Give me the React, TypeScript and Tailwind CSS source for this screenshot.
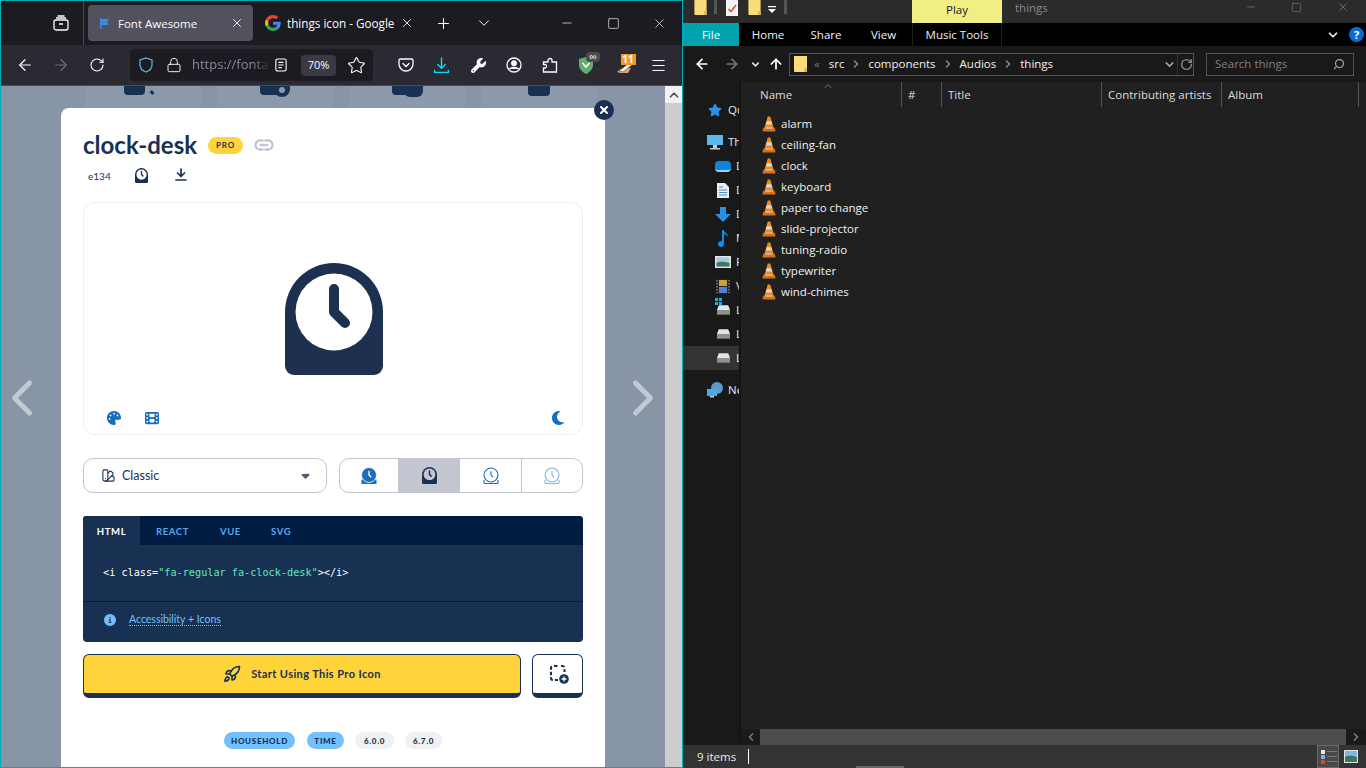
import { ArrowLeft, ArrowRight, ArrowUp, ChevronDown, ChevronLeft, ChevronRight, ChevronUp, Lock, Menu, Minus, Plus, Rocket, RotateCw, Search, Square, Star, SwatchBook, X } from 'lucide-react';
import { FaCaretDown, FaCircleInfo, FaFilm, FaMoon, FaPalette, FaStar, FaWrench } from 'react-icons/fa6';

const explorerFiles = ['alarm', 'ceiling-fan', 'clock', 'keyboard', 'paper to change', 'slide-projector', 'tuning-radio', 'typewriter', 'wind-chimes'];

function ClockDesk({ className, body, face }: { className: string; body: string; face: string }) {
  return (
    <svg viewBox="0 0 98 112" className={className}>
      <path d="M0 49a49 49 0 0 1 98 0v54a9 9 0 0 1-9 9H9a9 9 0 0 1-9-9z" fill={body} />
      <circle cx="49" cy="49" r="38.5" fill={face} />
      <path d="M49 26v23l11 11" fill="none" stroke={body} strokeWidth="10" strokeLinecap="round" strokeLinejoin="round" />
    </svg>
  );
}

function ClockOutline({ stroke, face = 'none' }: { stroke: string; face?: string }) {
  return (
    <svg viewBox="0 0 18 18" className="h-[18px] w-[18px]">
      <path d="M2 13v2.500a1 1 0 0 0 1 1h12a1 1 0 0 0 1-1V13" fill="none" stroke={stroke} strokeWidth="1.100" />
      <circle cx="9" cy="8" r="7" fill={face} stroke={stroke} strokeWidth="1.100" />
      <path d="M9 4.500V8l1.800 1.800" fill="none" stroke={stroke} strokeWidth="1.100" strokeLinecap="round" />
    </svg>
  );
}

function ClockSolid() {
  return (
    <svg viewBox="0 0 18 18" className="h-[18px] w-[18px]">
      <path d="M1.500 12.500h15V17h-15z" fill="#1a6fbe" />
      <circle cx="9" cy="8" r="7.500" fill="#1a6fbe" stroke="#fff" strokeWidth="0.800" />
      <path d="M9 4.500V8l1.800 1.800" fill="none" stroke="#fff" strokeWidth="1.400" strokeLinecap="round" />
    </svg>
  );
}

function VlcCone() {
  return (
    <svg viewBox="0 0 16 17" preserveAspectRatio="none" className="h-4 w-[14px] shrink-0">
      <path d="M6.600 0.500h2.800l4 12.500H2.600z" fill="#f08a1d" />
      <path d="M5.500 5.500h5l1 3.500h-7z" fill="#d9d9d9" />
      <path d="M1.500 12.500 H14.500 L15.500 16 Q15.500 16.500 15 16.500 H1 Q0.500 16.500 0.500 16z" fill="#e0700f" />
      <path d="M4 12h8v1.500H4z" fill="#c4c4c4" />
    </svg>
  );
}

function FolderIcon({ className }: { className: string }) {
  return (
    <svg viewBox="0 0 13 16" className={className}>
      <path d="M0 0h13v16H1a1 1 0 0 1-1-1z" fill="#f9dc7c" />
      <path d="M10 12h3v4h-3z" fill="#e3b94e" />
    </svg>
  );
}

function GoogleLogo() {
  return (
    <svg viewBox="0 0 48 48" className="h-4 w-4 shrink-0">
      <path fill="#EA4335" d="M24 9.500c3.500 0 6.700 1.200 9.200 3.600l6.900-6.900C35.900 2.400 30.500 0 24 0 14.600 0 6.500 5.400 2.600 13.200l8 6.200C12.500 13.700 17.800 9.500 24 9.500z" />
      <path fill="#4285F4" d="M47 24.500c0-1.600-.1-3.100-.4-4.500H24v9h12.900c-.6 3-2.200 5.500-4.700 7.200l7.700 6C44.400 37.900 47 31.800 47 24.500z" />
      <path fill="#FBBC05" d="M10.500 28.600c-.5-1.400-.8-3-.8-4.600s.3-3.200.8-4.600l-8-6.200C.9 16.500 0 20.100 0 24s.9 7.500 2.600 10.800z" />
      <path fill="#34A853" d="M24 48c6.500 0 11.900-2.100 15.900-5.800l-7.700-6c-2.200 1.400-4.900 2.300-8.200 2.300-6.200 0-11.500-4.200-13.400-9.900l-8 6.200C6.500 42.600 14.600 48 24 48z" />
    </svg>
  );
}

function NavRow({ indent, label, icon, selected }: { indent: boolean; label: string; icon: React.ReactNode; selected?: boolean }) {
  return (
    <div className={`flex h-6 items-center overflow-hidden whitespace-nowrap ${selected ? 'bg-[#333333]' : ''} ${indent ? 'pl-[32px]' : 'pl-[24px]'}`}>
      <span className="flex w-4 shrink-0 justify-center">{icon}</span>
      <span className="ml-[5px] text-[11.5px] text-[#e8e8e8]">{label}</span>
    </div>
  );
}

function DiskIcon({ system }: { system?: boolean }) {
  return (
    <span className="relative flex">
      <svg viewBox="0 0 16 12" className="h-3 w-[15px]">
        <path d="M3 1h10l2 5H1z" fill="#e4e4e4" />
        <path d="M1 6h14v5H1z" fill="#8f8f8f" />
        <circle cx="12.500" cy="8.500" r="0.900" fill="#3ddc5a" />
      </svg>
      {system && (
        <span className="absolute -left-px -top-[6px] grid grid-cols-2 gap-px">
          <span className="h-[3px] w-[3px] bg-[#21a8f0]" />
          <span className="h-[3px] w-[3px] bg-[#21a8f0]" />
          <span className="h-[3px] w-[3px] bg-[#21a8f0]" />
          <span className="h-[3px] w-[3px] bg-[#21a8f0]" />
        </span>
      )}
    </span>
  );
}

function BrowserSlot({ children }: { children: React.ReactNode }) {
  return <div className="flex h-10 w-9 items-center justify-center text-[#fbfbfe]">{children}</div>;
}

function BrowserPane() {
  return (
    <div className="flex h-[768px] w-[683px] shrink-0 flex-col overflow-hidden border border-[#00adb5] bg-[#1c1b22] font-['Open_Sans',sans-serif]">
      {/* tab strip */}
      <div className="flex h-11 shrink-0 items-start bg-[#1c1b22]">
        <div className="flex h-11 w-[83px] items-center justify-end border-r border-[#4a4a52] pr-[14px] text-[#fbfbfe]">
          <svg viewBox="0 0 16 16" className="h-4 w-4" fill="none" stroke="currentColor" strokeWidth="1.300">
            <rect x="1" y="5" width="14" height="10" rx="2" />
            <path d="M3 3h10M4.500 1h7M6 9h4" />
          </svg>
        </div>
        <div className="ml-1 mt-1 flex h-9 w-[165px] items-center rounded bg-[#52525e] pl-[11px] pr-[9px] text-[11.5px] text-[#fbfbfe]">
          <svg viewBox="0 0 11 11" className="h-[11px] w-[11px] shrink-0">
            <path d="M1 0h1.500v1H10L8 4l2 3H2.500v4H1z" fill="#3f8ae0" />
          </svg>
          <span className="ml-2 mt-[1px]">Font Awesome</span>
          <X className="ml-auto h-[14px] w-[14px]" strokeWidth={1.5} />
        </div>
        <div className="ml-[1px] mt-1 flex h-9 w-[168px] items-center pl-[11px] pr-2 text-[11.7px] text-[#fbfbfe]">
          <GoogleLogo />
          <span className="ml-[6px] mt-[1px] whitespace-nowrap">things icon - Google</span>
          <X className="ml-auto h-[14px] w-[14px]" strokeWidth={1.5} />
        </div>
        <div className="flex h-11 w-[42px] items-center justify-center text-[#fbfbfe]">
          <Plus className="h-[17px] w-[17px]" strokeWidth={1.5} />
        </div>
        <div className="flex h-11 w-[40px] items-center justify-center text-[#fbfbfe]">
          <ChevronDown className="h-[18px] w-[18px]" strokeWidth={1.3} />
        </div>
        <div className="ml-auto flex h-11 text-[#fbfbfe]">
          <div className="flex w-[46px] items-center justify-center">
            <Minus className="h-[14px] w-[14px]" strokeWidth={1.2} />
          </div>
          <div className="flex w-[46px] items-center justify-center">
            <Square className="h-[13px] w-[13px]" strokeWidth={1.2} />
          </div>
          <div className="flex w-[46px] items-center justify-center">
            <X className="h-[15px] w-[15px]" strokeWidth={1.1} />
          </div>
        </div>
      </div>

      {/* toolbar */}
      <div className="flex h-[41px] shrink-0 items-center border-b border-[#4a4a52] bg-[#2b2a33] pl-[6px]">
        <BrowserSlot>
          <ArrowLeft className="h-[18px] w-[18px]" strokeWidth={1.6} />
        </BrowserSlot>
        <BrowserSlot>
          <ArrowRight className="h-[18px] w-[18px] text-[#6f6e76]" strokeWidth={1.6} />
        </BrowserSlot>
        <BrowserSlot>
          <RotateCw className="h-4 w-4" strokeWidth={1.6} />
        </BrowserSlot>
        <div className="ml-[15px] mr-[15px] flex h-8 w-[243px] items-center rounded bg-[#1c1b22] pl-2 text-[#fbfbfe]">
          <svg viewBox="0 0 16 16" className="h-4 w-4 shrink-0" fill="none" stroke="#66b7f0" strokeWidth="1.200">
            <path d="M8 1l6 2v5c0 3.500-2.500 5.800-6 7-3.500-1.200-6-3.500-6-7V3z" />
          </svg>
          <Lock className="ml-3 h-4 w-4 shrink-0" strokeWidth={1.4} />
          <span className="ml-[10px] w-[76px] whitespace-nowrap bg-gradient-to-r from-[#8f8f9d] from-80% to-[#33323a] bg-clip-text text-[13px] text-transparent">https://fonta</span>
          <svg viewBox="0 0 14 16" className="ml-[7px] h-[14px] w-3 shrink-0" fill="none" stroke="currentColor" strokeWidth="1.300">
            <rect x="1" y="1" width="12" height="14" rx="2" />
            <path d="M4 5h6M4 8h6M4 11h4" />
          </svg>
          <span className="ml-[14px] flex h-[21px] w-[35px] shrink-0 items-center justify-center rounded bg-[#3a3944] text-[11px]">70%</span>
          <Star className="ml-[11px] h-[19px] w-[19px] shrink-0" strokeWidth={1.4} />
        </div>
        <BrowserSlot>
          <svg viewBox="0 0 16 16" className="h-4 w-4" fill="none" stroke="currentColor" strokeWidth="1.300">
            <path d="M2.500 2h11A1.500 1.500 0 0 1 15 3.500V7A7 7 0 0 1 1 7V3.500A1.500 1.500 0 0 1 2.500 2z" />
            <path d="M5 6.500L8 9.500l3-3" strokeLinecap="round" />
          </svg>
        </BrowserSlot>
        <BrowserSlot>
          <svg viewBox="0 0 16 16" className="h-[17px] w-[17px] -translate-x-px" fill="none" stroke="#00ddff" strokeWidth="1.300">
            <path d="M8 1v9.500M4.500 7L8 10.500 11.500 7" strokeLinecap="round" />
            <path d="M1.500 12v2.500h13V12" />
          </svg>
        </BrowserSlot>
        <BrowserSlot>
          <FaWrench className="h-[15px] w-[15px]" />
        </BrowserSlot>
        <BrowserSlot>
          <svg viewBox="0 0 16 16" className="h-4 w-4" fill="none" stroke="currentColor" strokeWidth="1.300">
            <circle cx="8" cy="8" r="7" />
            <circle cx="8" cy="6.300" r="2.300" fill="currentColor" />
            <path d="M3.500 12c1.500-2 7.500-2 9 0" fill="currentColor" />
          </svg>
        </BrowserSlot>
        <BrowserSlot>
          <svg viewBox="0 0 16 16" className="h-4 w-4" fill="none" stroke="currentColor" strokeWidth="1.300">
            <path d="M6 3.500a2 2 0 0 1 4 0V5h4.500v10H1.500v-4h2a2 2 0 0 0 0-3.500h-2V5H6z" />
          </svg>
        </BrowserSlot>
        <BrowserSlot>
          <div className="relative h-[17px] w-[16px]">
            <svg viewBox="0 0 16 17" className="h-[17px] w-4">
              <path d="M8 0l7 2v6c0 4-3 7-7 9-4-2-7-5-7-9V2z" fill="#62ad6f" />
              <path d="M4.500 6L8 10l3.500-4" fill="none" stroke="#fff" strokeWidth="1.500" />
            </svg>
            <span className="absolute -right-[6px] -top-[5px] flex h-[10px] w-[14px] items-center justify-center rounded-sm bg-[#4d4d4d] text-[11px] leading-none">∞</span>
          </div>
        </BrowserSlot>
        <BrowserSlot>
          <div className="relative ml-[5px] h-[17px] w-[16px]">
            <svg viewBox="0 0 16 12" className="mt-[5px] h-3 w-4">
              <path d="M0 10c3-4 8-5 14-4l-3 5H3z" fill="#e0a070" />
              <path d="M2 9l10-8 3 2L6 10z" fill="#f2f2f2" stroke="#333" strokeWidth="0.500" />
            </svg>
            <span className="absolute -right-[3px] -top-[3px] flex h-[11px] w-[15px] items-center justify-center bg-[#ee9a2d] text-[10px] font-bold leading-none text-white">11</span>
          </div>
        </BrowserSlot>
        <BrowserSlot>
          <Menu className="h-[17px] w-[17px]" strokeWidth={1.4} />
        </BrowserSlot>
      </div>

      {/* page */}
      <div className="flex min-h-0 flex-1">
        <div className="relative flex min-w-0 flex-1 flex-col overflow-hidden bg-[#8795a7] font-['Lato',sans-serif]">
          <div className="flex h-[22px] shrink-0 gap-4 pl-[84px]">
            <div className="flex h-[22px] w-[116px] items-start justify-center gap-[5px] bg-[#8c99aa] pr-[9px]">
              <div className="h-[9px] w-[21px] rounded-b bg-[#183153]" />
              <div className="mt-[5px] h-[3px] w-1 rotate-45 bg-[#183153]" />
            </div>
            <div className="flex h-[22px] w-[116px] items-start justify-center bg-[#8c99aa]">
              <div className="h-[9px] w-[22px] rounded-b bg-[#183153]" />
              <div className="-ml-2 flex h-[11px] w-4 items-start justify-center rounded-b-full bg-[#183153]">
                <div className="mt-px h-[6px] w-[6px] rounded-full bg-[#8c99aa]" />
              </div>
            </div>
            <div className="flex h-[22px] w-[116px] items-start justify-center bg-[#8c99aa]">
              <div className="h-[9px] w-[16px] rounded-b bg-[#183153]" />
              <div className="-ml-[4px] h-[11px] w-[19px] rounded-b-md bg-[#183153]" />
            </div>
            <div className="flex h-[22px] w-[116px] justify-center bg-[#8c99aa]">
              <div className="h-[10px] w-[22px] rounded-b bg-[#183153]" />
            </div>
          </div>

          <div className="relative ml-[60px] flex w-[544px] flex-1 flex-col rounded-t-lg bg-white px-[22px] text-[#183153]">
            <div className="mt-[22px] flex h-[30px] items-center">
              <h1 className="text-[24px] font-bold leading-none">clock-desk</h1>
              <span className="ml-[11px] flex h-[17px] w-[35px] items-center justify-center rounded-full bg-[#ffd43b] text-[8px] font-bold tracking-[0.8px]">PRO</span>
              <svg viewBox="0 0 20 14" className="ml-[11px] h-[14px] w-5" fill="none" stroke="#c3c6d1" strokeWidth="2.400" strokeLinecap="round">
                <path d="M8.500 2.500H6a4.500 4.500 0 0 0 0 9h2.500M11.500 2.500H14a4.500 4.500 0 0 1 0 9h-2.500M6.500 7h7" />
              </svg>
            </div>
            <div className="mt-[7px] flex h-[18px] items-center pl-[5px]">
              <span className="w-[46px] text-[10px]">e134</span>
              <ClockDesk className="ml-px h-[15px] w-[13px] -translate-y-[1px]" body="#183153" face="#ffffff" />
              <svg viewBox="0 0 12 13" className="ml-[27px] h-[13px] w-3 -translate-y-[2px]" fill="none" stroke="#183153" strokeWidth="1.700" strokeLinecap="round" strokeLinejoin="round">
                <path d="M6 1v7M2.500 5L6 8.500 9.500 5M1 12h10" />
              </svg>
            </div>

            <div className="mt-[17px] flex h-[233px] flex-col items-center rounded-xl border border-[#eeeff2] pt-[60px]">
              <ClockDesk className="ml-[2px] h-28 w-[98px]" body="#1e3050" face="#ffffff" />
              <div className="mb-2 mt-auto flex w-full items-center pl-[23px] pr-[17px] text-[14px] text-[#146ebe]">
                <FaPalette />
                <FaFilm className="ml-6" />
                <FaMoon className="ml-auto h-4" />
              </div>
            </div>

            <div className="mt-[23px] flex h-[35px] gap-3">
              <div className="flex w-[244px] items-center rounded-[10px] border border-[#c3c6d1] pl-[17px] pr-[14px]">
                <SwatchBook className="h-[15px] w-[15px]" strokeWidth={1.7} />
                <span className="ml-[6px] mt-[2px] text-[12.500px]">Classic</span>
                <FaCaretDown className="ml-auto h-[13px] w-[13px] text-[#515e71]" />
              </div>
              <div className="flex w-[244px] overflow-hidden rounded-[10px] border border-[#c3c6d1]">
                <div className="flex w-[58px] items-center justify-center">
                  <ClockSolid />
                </div>
                <div className="flex w-[62px] items-center justify-center bg-[#c3c6d1]">
                  <ClockDesk className="h-[17px] w-[15px]" body="#183153" face="#c3c6d1" />
                </div>
                <div className="flex w-[62px] items-center justify-center border-r border-[#c3c6d1]">
                  <ClockOutline stroke="#1a6fbe" />
                </div>
                <div className="flex flex-1 items-center justify-center">
                  <ClockOutline stroke="#7fb2df" />
                </div>
              </div>
            </div>

            <div className="mt-[23px] flex h-[126px] flex-col overflow-hidden rounded bg-[#183153]">
              <div className="flex h-[29px] shrink-0 items-center bg-[#001c40] text-[9.500px] font-bold tracking-[0.6px] text-[#4dabf7]">
                <span className="flex h-[29px] w-[57px] items-center justify-center bg-[#183153] pt-[3px] text-white">HTML</span>
                <span className="ml-4 mt-[3px] w-[64px]">REACT</span>
                <span className="mt-[3px] w-[51px]">VUE</span>
                <span className="mt-[3px]">SVG</span>
              </div>
              <div className="flex h-[57px] shrink-0 items-center border-b border-[#001c40] pl-5 font-['DejaVu_Sans_Mono',monospace] text-[10.200px] text-white">
                <span>&lt;i class=</span>
                <span className="text-[#63e6be]">"fa-regular fa-clock-desk"</span>
                <span>&gt;&lt;/i&gt;</span>
              </div>
              <div className="flex flex-1 items-center pb-[5px] pl-[21px] text-[#74c0fc]">
                <FaCircleInfo className="h-3 w-3" />
                <span className="ml-[13px] border-b border-dotted border-[#74c0fc] text-[10.500px] leading-[12px]">Accessibility + Icons</span>
              </div>
            </div>

            <div className="mt-3 flex h-[44px] gap-[11px]">
              <div className="flex w-[438px] items-center justify-center rounded-md border border-b-[5px] border-[#183153] bg-[#ffd43b] text-[11px] font-bold">
                <Rocket className="h-[18px] w-[18px]" strokeWidth={2.2} />
                <span className="ml-[10px] tracking-[0.4px]">Start Using This Pro Icon</span>
              </div>
              <div className="flex flex-1 items-center justify-center rounded-md border border-b-[5px] border-[#183153] bg-white">
                <svg viewBox="0 0 20 20" className="ml-[2px] h-5 w-5" fill="none" stroke="#183153" strokeWidth="2.100">
                  <path d="M8.500 2H4a2 2 0 0 0-2 2v10a2 2 0 0 0 2 2h5M12 2h1.500a2 2 0 0 1 2 2v4" strokeDasharray="3.500 2" />
                  <circle cx="15" cy="15" r="4.800" fill="#183153" stroke="none" />
                  <path d="M15 12.500v5M12.500 15h5" stroke="#fff" strokeWidth="1.300" />
                </svg>
              </div>
            </div>

            <div className="mt-[34px] flex h-[17px] justify-center text-[8px] font-black tracking-[0.7px]">
              <span className="flex w-[71px] items-center justify-center rounded-full bg-[#74c0fc]">HOUSEHOLD</span>
              <span className="ml-3 flex w-[37px] items-center justify-center rounded-full bg-[#74c0fc]">TIME</span>
              <span className="ml-[11px] flex w-[39px] items-center justify-center rounded-full bg-[#f0f1f3]">6.0.0</span>
              <span className="ml-[11px] flex w-[37px] items-center justify-center rounded-full bg-[#f0f1f3]">6.7.0</span>
            </div>

            <div className="absolute -right-[9px] -top-2 flex h-5 w-5 items-center justify-center rounded-full bg-[#183153] text-white">
              <X className="h-3 w-3" strokeWidth={4} />
            </div>
          </div>

          <ChevronLeft className="absolute -left-[9px] top-[282px] h-[60px] w-[60px] text-[#c3c9d3]" strokeWidth={2} />
          <ChevronRight className="absolute left-[612px] top-[282px] h-[60px] w-[60px] text-[#c3c9d3]" strokeWidth={2} />
        </div>
        <div className="flex w-[17px] shrink-0 flex-col bg-[#cdcdcd]">
          <div className="flex h-[17px] items-center justify-center bg-[#f1f1f1] text-[#505050]">
            <ChevronUp className="h-[14px] w-[14px]" strokeWidth={3} />
          </div>
        </div>
      </div>
    </div>
  );
}

function ExplorerPane() {
  return (
    <div className="flex h-[768px] min-w-0 flex-1 flex-col bg-[#202020] font-['Open_Sans',sans-serif] text-[11.500px] text-[#f0f0f0]">
      {/* title bar */}
      <div className="flex h-[23px] shrink-0 items-start bg-[#2b2b2b]">
        <div className="flex h-[23px] w-[229px] items-start pl-[11px]">
          <FolderIcon className="h-[15px] w-[13px]" />
          <span className="ml-[7px] h-[14px] w-[3px] bg-[#555555]" />
          <svg viewBox="0 0 12 16" className="ml-[9px] h-4 w-3">
            <path d="M0 0h12v16H0z" fill="#f4f4f4" />
            <path d="M2.500 9l2.500 2.500L10 5" fill="none" stroke="#e0562a" strokeWidth="1.600" />
          </svg>
          <FolderIcon className="ml-[10px] h-[15px] w-[13px]" />
          <svg viewBox="0 0 8 7" className="ml-[7px] mt-[6px] h-[7px] w-2" fill="#ffffff">
            <path d="M0 0h8v1.200H0zM0 3h8L4 7z" />
          </svg>
          <span className="ml-[8px] h-[14px] w-[3px] bg-[#555555]" />
        </div>
        <div className="flex h-[23px] w-[90px] items-center justify-center bg-[#f0ee85] pb-1 text-[#202020]">Play</div>
        <span className="ml-[13px] -mt-[1px] text-[#8a8a8a]">things</span>
        <div className="ml-auto flex h-[14px] items-center text-[#8a8a8a]">
          <Minus className="h-3 w-3" strokeWidth={1.2} />
          <Square className="ml-[34px] h-[11px] w-[11px]" strokeWidth={1.2} />
          <X className="ml-[34px] mr-4 h-[14px] w-[14px]" strokeWidth={1.1} />
        </div>
      </div>

      {/* ribbon tabs */}
      <div className="flex h-[23px] shrink-0 items-center bg-black">
        <div className="flex h-[23px] w-14 items-center justify-center bg-[#00a4ae] text-white">File</div>
        <div className="flex w-[58px] justify-center">Home</div>
        <div className="flex w-[58px] justify-center">Share</div>
        <div className="flex w-[57px] justify-center">View</div>
        <div className="flex h-[23px] w-[90px] items-center justify-center border-x border-[#222222]">Music Tools</div>
        <div className="ml-auto flex items-center pr-[2px]">
          <ChevronDown className="h-[14px] w-[14px]" strokeWidth={3} />
          <span className="ml-[9px] flex h-[15px] w-[15px] items-center justify-center rounded-full bg-[#0a6cd0] text-[11px] font-bold leading-none text-white">?</span>
        </div>
      </div>

      {/* address row */}
      <div className="flex h-[36px] shrink-0 items-center bg-[#191919]">
        <ArrowLeft className="ml-[11px] h-4 w-4 text-white" strokeWidth={2.6} />
        <ArrowRight className="ml-[14px] h-4 w-4 text-[#777777]" strokeWidth={2.6} />
        <ChevronDown className="ml-[10px] h-[11px] w-[11px] text-[#e0e0e0]" strokeWidth={3.5} />
        <ArrowUp className="ml-[7px] h-4 w-4 text-white" strokeWidth={2.6} />
        <div className="ml-[5px] flex h-[23px] w-[405px] items-center border border-[#555555] bg-[#191919] pl-[4px]">
          <FolderIcon className="h-4 w-[13px]" />
          <span className="ml-[7px] text-[#777777]">«</span>
          <span className="ml-[9px]">src</span>
          <ChevronRight className="mx-[6px] h-3 w-3 text-[#8a8a8a]" strokeWidth={3} />
          <span>components</span>
          <ChevronRight className="mx-[6px] h-3 w-3 text-[#8a8a8a]" strokeWidth={3} />
          <span>Audios</span>
          <ChevronRight className="mx-[6px] h-3 w-3 text-[#8a8a8a]" strokeWidth={3} />
          <span>things</span>
          <ChevronDown className="ml-auto h-[13px] w-[13px] text-[#a0a0a0]" strokeWidth={3} />
          <span className="ml-px h-[21px] w-px bg-[#333333]" />
          <RotateCw className="ml-[2px] h-[13px] w-[13px] text-[#8a8a8a]" strokeWidth={2.5} />
        </div>
        <div className="ml-[12px] flex h-[23px] w-[148px] items-center justify-between border border-[#555555] pl-2 pr-2 text-[#808080]">
          <span>Search things</span>
          <Search className="h-3 w-3 -scale-x-100 text-[#a0a0a0]" strokeWidth={2.5} />
        </div>
      </div>

      {/* sidebar and file list */}
      <div className="flex min-h-0 flex-1">
        <div className="flex w-[58px] shrink-0 flex-col border-r-2 border-[#141414] bg-[#191919] pt-4">
          <NavRow indent={false} label="Qu" icon={<FaStar className="h-[14px] w-[14px] text-[#2c8fe8]" />} />
          <div className="mt-2" />
          <NavRow
            indent={false}
            label="Th"
            icon={
              <svg viewBox="0 0 16 15" className="h-[15px] w-4">
                <path d="M0 0h16v10H0z" fill="#5ab7f0" />
                <path d="M6 10h4v3H6zM3 13h10v1.500H3z" fill="#c9c9c9" />
              </svg>
            }
          />
          <NavRow indent label="D" icon={<span className="h-[11px] w-4 rounded-sm border-b-2 border-[#9fd4f5] bg-[#0a84dc]" />} />
          <NavRow
            indent
            label="D"
            icon={
              <svg viewBox="0 0 12 15" className="h-[15px] w-3">
                <path d="M0 0h8l4 4v11H0z" fill="#ececec" />
                <path d="M2 4h4M2 7h8M2 9.500h8M2 12h8" stroke="#4a8fc4" strokeWidth="1.100" />
              </svg>
            }
          />
          <NavRow
            indent
            label="D"
            icon={
              <svg viewBox="0 0 16 15" className="h-[15px] w-4">
                <path d="M5 0h6v7h5l-8 8-8-8h5z" fill="#2a8fe0" />
              </svg>
            }
          />
          <NavRow
            indent
            label="M"
            icon={
              <svg viewBox="0 0 12 17" className="h-[17px] w-3">
                <path d="M5 0h2c0 3 4 3 4 7-1-2-2-2.500-4-3v10a3 3 0 1 1-2-2.800z" fill="#0e8ee8" />
              </svg>
            }
          />
          <NavRow
            indent
            label="P"
            icon={
              <svg viewBox="0 0 16 12" className="h-3 w-4">
                <path d="M0 0h16v12H0z" fill="#e4e4e4" />
                <path d="M1.500 1.500h13v9h-13z" fill="#a4cbe0" />
                <path d="M1.500 7c4-2 8-1 13 0v3.500h-13z" fill="#3f7460" />
              </svg>
            }
          />
          <NavRow
            indent
            label="V"
            icon={
              <svg viewBox="0 0 14 15" className="h-[15px] w-[14px]">
                <path d="M0 0h14v15H0z" fill="#222222" />
                <path d="M3 1h8v6H3z" fill="#c9a23c" />
                <path d="M3 8h8v6H3z" fill="#4f82dd" />
                <path d="M1 1v13M13 1v13" stroke="#9a9a9a" strokeWidth="1.200" strokeDasharray="1.500 1.500" />
              </svg>
            }
          />
          <NavRow indent label="L" icon={<DiskIcon system />} />
          <NavRow indent label="L" icon={<DiskIcon />} />
          <NavRow indent selected label="L" icon={<DiskIcon />} />
          <div className="mt-2" />
          <NavRow
            indent={false}
            label="Ne"
            icon={
              <svg viewBox="0 0 16 16" className="h-4 w-4">
                <circle cx="10" cy="6" r="6" fill="#5b9bc9" />
                <path d="M0 7h10v7H0z" fill="#4aa9e6" />
                <path d="M3 14h4v1.500H3z" fill="#c9c9c9" />
              </svg>
            }
          />
        </div>

        <div className="flex min-w-0 flex-1 flex-col">
          <div className="relative flex h-[25px] shrink-0 items-center text-[#dcdcdc]">
            <div className="flex h-[25px] w-[161px] items-center border-r border-[#555555] pl-[19px]">Name</div>
            <div className="flex h-[25px] w-[40px] items-center border-r border-[#555555] pl-[6px]">#</div>
            <div className="flex h-[25px] w-[160px] items-center border-r border-[#555555] pl-[6px]">Title</div>
            <div className="flex h-[25px] w-[120px] items-center whitespace-nowrap border-r border-[#555555] pl-[6px]">Contributing artists</div>
            <div className="flex h-[25px] w-[137px] items-center border-r border-[#555555] pl-[6px]">Album</div>
            <ChevronUp className="absolute left-[81px] -top-[2px] h-3 w-3 text-[#9a9a9a]" strokeWidth={1.5} />
          </div>
          <div className="mt-[6px] min-h-0 flex-1 pl-[21px]">
            {explorerFiles.map((name) => (
              <div key={name} className="flex h-[21px] items-center">
                <VlcCone />
                <span className="ml-[5px] text-[#f0f0f0]">{name}</span>
              </div>
            ))}
          </div>
          <div className="flex h-4 shrink-0 items-center bg-[#1a1a1a] text-[#777777]">
            <div className="flex w-[19px] justify-center">
              <ChevronLeft className="h-3 w-3" strokeWidth={3.5} />
            </div>
            <div className="h-4 flex-1 bg-[#4d4d4d]" />
            <div className="flex w-[20px] justify-center">
              <ChevronRight className="h-3 w-3" strokeWidth={3.5} />
            </div>
          </div>
        </div>
      </div>

      {/* status bar */}
      <div className="relative flex h-[23px] shrink-0 items-center bg-[#333333] pl-[14px] text-[#e8e8e8]">
        <span>9 items</span>
        <span className="ml-[12px] h-[15px] w-px bg-white" />
        <div className="ml-auto flex h-[23px] w-[22px] flex-col items-start justify-center gap-px border border-[#6a6a6a] bg-[#4a4a4a] pl-[3px]">
          <span className="flex items-center gap-[2px]">
            <span className="h-[4px] w-[4px] bg-[#e8e8e8]" />
            <span className="h-px w-[10px] bg-[#7a7a7a]" />
          </span>
          <span className="flex items-center gap-[2px]">
            <span className="h-[4px] w-[4px] bg-[#6fb7e8]" />
            <span className="h-px w-[10px] bg-[#7a7a7a]" />
          </span>
          <span className="flex items-center gap-[2px]">
            <span className="h-[4px] w-[4px] bg-[#d04a3a]" />
            <span className="h-px w-[10px] bg-[#7a7a7a]" />
          </span>
        </div>
        <svg viewBox="0 0 14 13" className="ml-[5px] mr-[8px] h-[13px] w-[14px]">
          <path d="M0 0h14v13H0z" fill="#e4e4e4" />
          <path d="M1 1h12v11H1z" fill="#7db8e0" />
          <path d="M1 7c4-2 7-1 12 0v5H1z" fill="#3f7460" />
        </svg>
        <span className="absolute bottom-0 left-[173px] h-[2px] w-[48px] bg-[#666666]" />
      </div>
    </div>
  );
}

export default function App() {
  return (
    <div className="flex h-[768px] w-[1366px] overflow-hidden bg-[#202020]">
      <BrowserPane />
      <ExplorerPane />
    </div>
  );
}
